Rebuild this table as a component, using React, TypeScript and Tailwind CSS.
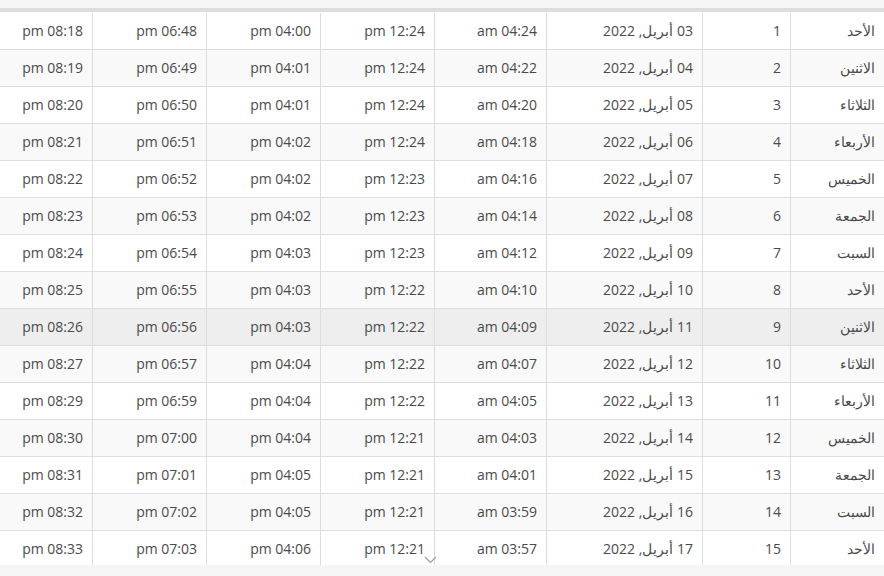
import React from 'react';

type Row = [string, number, string, string, string, string, string, string];

const rows: Row[] = [
  ['الأحد', 1, '03', '04:24', '12:24', '04:00', '06:48', '08:18'],
  ['الاثنين', 2, '04', '04:22', '12:24', '04:01', '06:49', '08:19'],
  ['الثلاثاء', 3, '05', '04:20', '12:24', '04:01', '06:50', '08:20'],
  ['الأربعاء', 4, '06', '04:18', '12:24', '04:02', '06:51', '08:21'],
  ['الخميس', 5, '07', '04:16', '12:23', '04:02', '06:52', '08:22'],
  ['الجمعة', 6, '08', '04:14', '12:23', '04:02', '06:53', '08:23'],
  ['السبت', 7, '09', '04:12', '12:23', '04:03', '06:54', '08:24'],
  ['الأحد', 8, '10', '04:10', '12:22', '04:03', '06:55', '08:25'],
  ['الاثنين', 9, '11', '04:09', '12:22', '04:03', '06:56', '08:26'],
  ['الثلاثاء', 10, '12', '04:07', '12:22', '04:04', '06:57', '08:27'],
  ['الأربعاء', 11, '13', '04:05', '12:22', '04:04', '06:59', '08:29'],
  ['الخميس', 12, '14', '04:03', '12:21', '04:04', '07:00', '08:30'],
  ['الجمعة', 13, '15', '04:01', '12:21', '04:05', '07:01', '08:31'],
  ['السبت', 14, '16', '03:59', '12:21', '04:05', '07:02', '08:32'],
  ['الأحد', 15, '17', '03:57', '12:21', '04:06', '07:03', '08:33'],
];

const cell = 'h-[37px] pr-[9px] pb-[2px] text-right align-middle border-b border-[#dddddd] whitespace-nowrap';

export default function App() {
  return (
    <div
      className="relative w-[884px] bg-white text-[14px] text-[#4a4a4a]"
      style={{ fontFamily: '"Open Sans", "Noto Sans", sans-serif' }}
    >
      <div className="h-2 bg-[#f4f5f6]" />
      <div className="h-1 bg-[#dddddd]" />
      <div className="h-[553px] overflow-hidden pt-px">
        <table dir="rtl" className="w-full table-fixed border-separate border-spacing-0">
          <colgroup>
            <col className="w-[94px]" />
            <col className="w-[88px]" />
            <col className="w-[156px]" />
            <col className="w-[112px]" />
            <col className="w-[114px]" />
            <col className="w-[114px]" />
            <col className="w-[114px]" />
            <col className="w-[92px]" />
          </colgroup>
          <tbody>
            {rows.map((r, i) => {
              const bg = r[1] === 9 ? 'bg-[#eeeeee]' : i % 2 === 1 ? 'bg-[#f9f9f9]' : 'bg-white';
              return (
                <tr key={r[1]} className={bg}>
                  <td className={`${cell} border-l`}>{r[0]}</td>
                  <td className={`${cell} border-l`}>{r[1]}</td>
                  <td className={`${cell} border-l`}>{r[2]} أبريل, 2022</td>
                  <td className={`${cell} border-l`}>{r[3]} am</td>
                  <td className={`${cell} border-l`}>{r[4]} pm</td>
                  <td className={`${cell} border-l`}>{r[5]} pm</td>
                  <td className={`${cell} border-l`}>{r[6]} pm</td>
                  <td className={cell}>{r[7]} pm</td>
                </tr>
              );
            })}
          </tbody>
        </table>
      </div>
      <div className="h-[11px] bg-[#f5f5f5]" />
      <svg
        className="absolute left-[424px] top-[556px]"
        width="13"
        height="8"
        viewBox="0 0 13 8"
        fill="none"
      >
        <path d="M1 1l5.5 5.5L12 1" stroke="#9a9a9a" strokeWidth="1.2" />
      </svg>
    </div>
  );
}
